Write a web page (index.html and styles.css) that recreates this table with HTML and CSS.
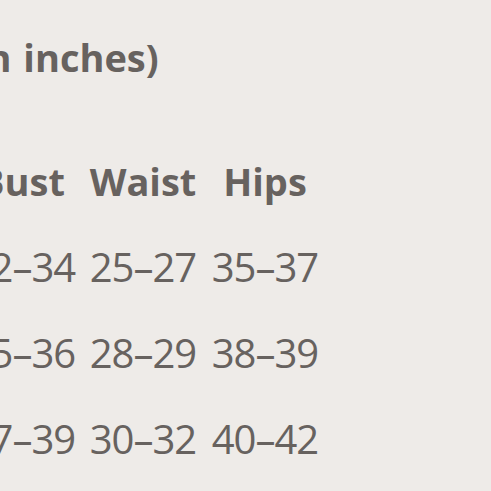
FILE: index.html
```
<!DOCTYPE html>
<html>
<head>
<meta charset="utf-8">
<link rel="stylesheet" href="styles.css">
</head>
<body>
<div class="sheet">
  <div class="title">(in inches)</div>
  <div class="table">
    <div class="cell head">Bust</div><div class="cell head">Waist</div><div class="cell head">Hips</div>
    <div class="cell">32–34</div><div class="cell">25–27</div><div class="cell">35–37</div>
    <div class="cell">35–36</div><div class="cell">28–29</div><div class="cell">38–39</div>
    <div class="cell">37–39</div><div class="cell">30–32</div><div class="cell">40–42</div>
  </div>
</div>
</body>
</html>
```
FILE: styles.css
```
html, body {
  margin: 0;
  padding: 0;
  background: #eeebe8;
  overflow: hidden;
  width: 491px;
  height: 491px;
}
.sheet {
  font-family: "Open Sans", "Noto Sans", sans-serif;
  color: #67625f;
  padding-top: 32px;
}
.title {
  font-weight: 700;
  font-size: 38px;
  line-height: 50px;
  margin-left: -38px;
  word-spacing: 2px;
  white-space: nowrap;
}
.table {
  margin-top: 56px;
  margin-left: -38px;
  display: grid;
  grid-template-columns: 120px 122px 122px;
}
.cell {
  text-align: center;
  font-size: 40px;
  line-height: 86px;
  white-space: nowrap;
  letter-spacing: -1px;
}
.cell.head {
  font-weight: 700;
  font-size: 38px;
  letter-spacing: 0;
}
```
